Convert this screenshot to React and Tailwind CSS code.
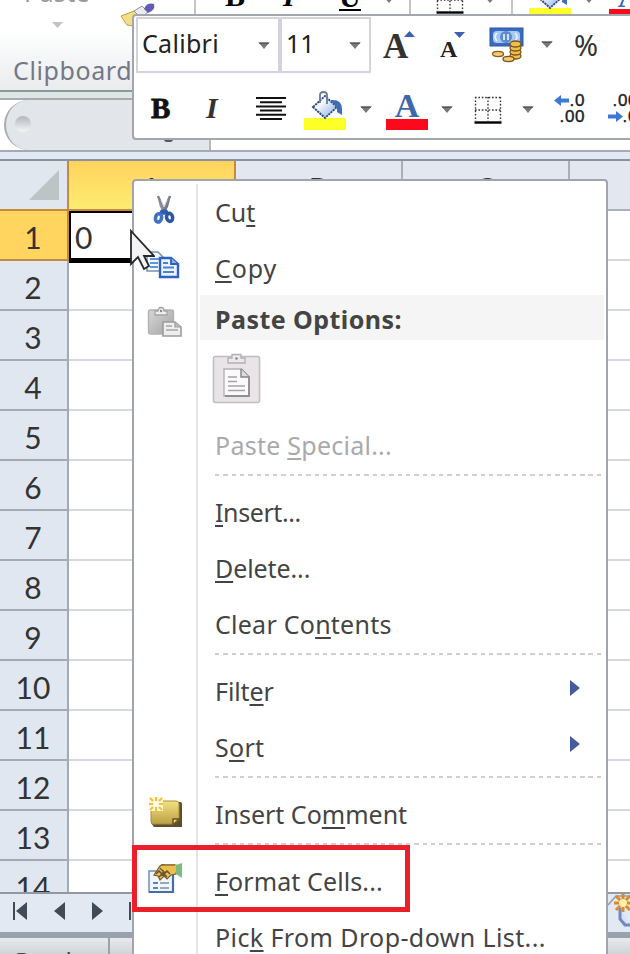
const COLUMNS = ['A', 'B', 'C', 'D'];
const ROWS = [1, 2, 3, 4, 5, 6, 7, 8, 9, 10, 11, 12, 13, 14];

const MENU = [
  { label: 'Cu&t', icon: 'cut' },
  { label: '&Copy', icon: 'copy', tracking: 'tracking-[0.9px]' },
  { type: 'paste', label: 'Paste Options:' },
  { label: 'Paste &Special...', disabled: true, tracking: 'tracking-[0.25px]' },
  { type: 'separator' },
  { label: '&Insert...', tracking: 'tracking-[-0.4px]' },
  { label: '&Delete...', tracking: 'tracking-[-0.1px]' },
  { label: 'Clear Co&ntents', tracking: 'tracking-[0.25px]' },
  { type: 'separator' },
  { label: 'Filt&er', submenu: true, tracking: 'tracking-[-0.1px]' },
  { label: 'S&ort', submenu: true, tracking: 'tracking-[0.3px]' },
  { type: 'separator' },
  { label: 'Insert Co&mment', icon: 'comment' },
  { type: 'separator' },
  { label: '&Format Cells...', icon: 'format', tracking: 'tracking-[0.1px]' },
  { label: 'Pic&k From Drop-down List...', tracking: 'tracking-[0.4px]' },
];

const CutIcon = () => (
  <svg className="w-[22px] h-[30px] relative -left-[1px]" viewBox="0 0 22 30">
    <path d="M4 1 L6 1 L12 14 L10 17 L7 12 Z" fill="#8f959d" />
    <path d="M18 1 L16 1 L10 14 L12 17 L15 12 Z" fill="#6e757e" />
    <path d="M5 1 L11 14 M17 1 L11 14" stroke="#7d848d" strokeWidth="2" />
    <path d="M8 5 L11 12 M14 5 L11 12" stroke="#d9dcdf" strokeWidth="1" />
    <path d="M8 14.500 L14 14.500 L16 18 L11 20 L6 18 Z" fill="#2f5fae" />
    <ellipse cx="5.500" cy="23" rx="3" ry="4.200" fill="#fff" stroke="#4272c4" strokeWidth="3.600" transform="rotate(14 6 23)" />
    <ellipse cx="16.500" cy="22.500" rx="3" ry="4" fill="#fff" stroke="#2c57a5" strokeWidth="3.600" transform="rotate(-14 16 22)" />
  </svg>
);

const CopyIcon = () => (
  <svg className="w-[34px] h-[30px] relative -left-[2px] -top-[1px]" viewBox="0 0 34 30">
    <path d="M1 2 H12 L17 7 V21 H1 Z" fill="#f4f8fd" stroke="#7891ab" strokeWidth="1.5" />
    <path d="M4 9 H13 M4 13 H12 M4 17 H12" stroke="#5d94dc" strokeWidth="2" />
    <path d="M14 8 H25 L32 14 V27 H14 Z" fill="#eaf3ff" stroke="#2e61c0" strokeWidth="2.400" />
    <path d="M25 8 V14 H32" fill="#8fb4ea" stroke="#2e61c0" strokeWidth="1.8" />
    <path d="M17 13 H22 M17 17.5 H28 M17 22 H28" stroke="#4a80d8" strokeWidth="2.200" />
  </svg>
);

const PasteIcon = () => (
  <svg className="w-[36px] h-[32px]" viewBox="0 0 36 32">
    <defs>
      <linearGradient id="clip" x1="0" y1="0" x2="1" y2="1">
        <stop offset="0" stopColor="#d8d8d8" />
        <stop offset="1" stopColor="#a2a2a2" />
      </linearGradient>
    </defs>
    <rect x="1.5" y="4" width="25" height="24" rx="2" fill="url(#clip)" stroke="#b2b2b2" strokeWidth="1.4" />
    <path d="M8 9 V5 H11 Q11 1.5 14 1.5 T17 5 H20 V9 Z" fill="#efefef" stroke="#a5a5a5" strokeWidth="1.3" />
    <circle cx="14" cy="5" r="1.2" fill="#888" />
    <path d="M16 16 H28 L34 21 V30 H16 Z" fill="#eee" stroke="#9c9c9c" strokeWidth="1.6" />
    <path d="M28 16 V21 H34" fill="#bbb" stroke="#9c9c9c" strokeWidth="1.2" />
    <path d="M19 20 H25 M19 24 H31" stroke="#a5a5a5" strokeWidth="1.5" />
  </svg>
);

const CommentIcon = () => (
  <svg className="w-[36px] h-[32px]" viewBox="0 0 36 32">
    <defs>
      <linearGradient id="note" x1="0" y1="0" x2="0" y2="1">
        <stop offset="0" stopColor="#f3e185" />
        <stop offset="1" stopColor="#bd9f42" />
      </linearGradient>
    </defs>
    <path d="M8 6 H33 Q35 6 35 8 V31 H7 L4 27 Z" fill="#5c4e2d" />
    <path d="M7 5 H29 Q32 5 32 8 V24 L27 28 H6 Q4 28 4 25 V9 Z" fill="url(#note)" stroke="#a98f3d" strokeWidth="1" />
    <path d="M26 29 V23 H32 Z" fill="#f3dc77" stroke="#665322" strokeWidth="1.5" />
    <path d="M2 1 H16 V15 H2 Z" fill="#fff7d6" />
    <path d="M9 1 V5 M9 11 V15 M2 8 H6 M12 8 H16 M3 2 L6 5 M12 11 L15 14 M15 2 L12 5 M6 11 L3 14" stroke="#f0c23c" strokeWidth="2" />
    <circle cx="9" cy="8" r="2" fill="#fff" />
  </svg>
);

const FormatIcon = () => (
  <svg className="w-[36px] h-[32px] relative -top-[1px]" viewBox="0 0 36 32">
    <rect x="2" y="9" width="24" height="21" fill="#f1f6fd" stroke="#7794bf" strokeWidth="1.6" />
    <path d="M26 9 V30 H2" fill="none" stroke="#456da8" strokeWidth="2.2" />
    <path d="M6 21 H11 M6 26 H11" stroke="#5685c8" strokeWidth="2" />
    <path d="M13 21 H22 M13 26 H22" stroke="#7c8ea8" strokeWidth="1.4" />
    <path d="M7 13 L13 4 Q15 2 18 3 L29 3 V12 L24 13 L20 17 L17 14 L13 18 L11 14 Z" fill="#e5c468" stroke="#7a5d25" strokeWidth="1.2" />
    <path d="M9 12 L12 9 L16 13 L20 9 L23 12 M12 15 L16 11 L20 15 M13 6 L18 11" fill="none" stroke="#6f5527" strokeWidth="1.6" />
    <path d="M16 3 H28 Q30 3 30 5 V10 Q25 12 20 8 L14 7 Z" fill="#f0bd4c" />
    <path d="M14 3 H28" stroke="#81652c" strokeWidth="1.3" />
    <path d="M29 3 L35 1 V16 L29 12 Z" fill="#7fba7a" />
  </svg>
);

const MENU_ICONS = { cut: CutIcon, copy: CopyIcon, comment: CommentIcon, format: FormatIcon };

const PasteButton = () => (
  <svg className="block w-[49px] h-[52px]" viewBox="0 0 49 52">
    <rect x="1.5" y="3.500" width="46" height="46" rx="2" fill="#e8e4e8" stroke="#c0bdc0" strokeWidth="1.6" />
    <path d="M16 10 V5 H20 V1.5 H29 V5 H33 V10 Z" fill="#ece9ec" stroke="#b2afb2" strokeWidth="1.3" />
    <circle cx="24.5" cy="5.5" r="1.3" fill="#8b888b" />
    <path d="M12 16 H29 L37 24 V43 H12 Z" fill="#fbfafb" stroke="#b5b1b5" strokeWidth="1.4" />
    <path d="M29 16 L37 24 V43 H13" fill="none" stroke="#918e91" strokeWidth="1.8" />
    <path d="M29 16 V24 H37" fill="#ddd" stroke="#858285" strokeWidth="1.4" />
    <path d="M16 24 H25 M16 28.5 H25 M16 33 H33 M16 37.5 H33" stroke="#a6a3a6" strokeWidth="1.5" />
  </svg>
);

const Caret = ({ className = '' }) => (
  <svg className={`shrink-0 w-[12px] h-[7px] ${className}`} viewBox="0 0 12 7">
    <path d="M0.5 0.5 H11.5 L6 7 Z" fill="#77797c" />
    <path d="M0.5 0.5 H11.5 L10.5 2 H1.5 Z" fill="#55575a" />
  </svg>
);

const FillIcon = () => (
  <svg className="shrink-0 w-[42px] h-[40px]" viewBox="0 0 42 40">
    <defs>
      <linearGradient id="pail" x1="0" y1="0" x2="1" y2="1">
        <stop offset="0.3" stopColor="#fff" />
        <stop offset="1" stopColor="#7fa7e0" />
      </linearGradient>
    </defs>
    <rect y="28" width="42" height="12" fill="#ffff28" />
    <path d="M9 17 L21 6 L33 17 L21 28 Z" fill="url(#pail)" stroke="#2c4d86" strokeWidth="1.9" strokeDasharray="2.2 0.8" />
    <path d="M16 13 V5 Q16 2 19.500 2 T23 5 V14" fill="none" stroke="#6b7b96" strokeWidth="1.8" />
    <path d="M27 10 Q38 9 38 19 V25 L33 22 Q34 15 27 12 Z" fill="#3e6cb5" />
  </svg>
);

const FontColorIcon = () => (
  <div className="shrink-0 w-[42px] h-[40px] flex flex-col items-center">
    <span className="h-[29px] pt-[3px] font-['Liberation_Serif',serif] font-bold text-[34px] leading-[25px] text-[#3f68ab]">A</span>
    <span className="w-[42px] h-[11px] bg-[#fc0a1b]" />
  </div>
);

const BorderIcon = () => (
  <svg className="shrink-0 w-[28px] h-[28px]" viewBox="0 0 28 28">
    <path d="M1 1.500 H27 M1 14 H27 M1.500 1 V25 M14 1 V25 M26.500 1 V25" stroke="#333" strokeWidth="1.4" strokeDasharray="1.6 1.8" />
    <path d="M0.500 26.500 H27.500" stroke="#000" strokeWidth="2.4" />
  </svg>
);

const MoneyIcon = () => (
  <svg className="shrink-0 w-[36px] h-[36px]" viewBox="0 0 36 36">
    <rect x="1" y="1" width="33" height="18" fill="#386cc0" stroke="#2b579f" />
    <rect x="4" y="4" width="27" height="12" rx="4" fill="#a9c8f1" />
    <ellipse cx="17" cy="10" rx="6" ry="6" fill="#5e8bd0" />
    <path d="M8 6 Q4 10 8 14 M26 6 Q30 10 26 14 M15 7 V13 M19 7 V13" stroke="#e9f2ff" strokeWidth="1.7" fill="none" />
    {[29, 25, 21, 17].map((y) => (
      <ellipse key={y} cx="26.500" cy={y} rx="5.500" ry="3" fill="#efbf4b" stroke="#79531c" strokeWidth="1.3" />
    ))}
    <ellipse cx="9" cy="27" rx="5.500" ry="2.600" fill="#f2cb72" stroke="#8b5c1c" strokeWidth="1.3" />
    <ellipse cx="19.500" cy="32" rx="5.500" ry="2.600" fill="#f2cb72" stroke="#79531c" strokeWidth="1.3" />
  </svg>
);

const DecimalArrow = ({ flipped }) => (
  <svg className={`w-[16px] h-[11px] ${flipped ? '-scale-x-100' : ''}`} viewBox="0 0 16 11">
    <path d="M0 5.500 L7 0 V3.500 H15 V7.500 H7 V11 Z" fill="#3c78d8" />
  </svg>
);

const DecimalIcon = ({ increase }) => (
  <div className="shrink-0 w-[34px] font-['Liberation_Sans',sans-serif] text-[17px] leading-[16px] tracking-[0.6px] text-[#222] [-webkit-text-stroke:0.4px_#222]">
    <div className={increase ? 'flex items-center justify-end' : 'text-right'}>
      {increase && <DecimalArrow />}
      {increase ? '.0' : '.00'}
    </div>
    <div className={increase ? 'text-right' : 'flex items-center justify-end'}>
      {!increase && <DecimalArrow flipped />}
      {increase ? '.00' : '.0'}
    </div>
  </div>
);

const Ribbon = () => (
  <div className="h-[92px] shrink-0 border-b-2 border-[#8d9996] bg-linear-to-b from-white from-35% to-[#e9ebed]">
    <div className="flex h-[33px] overflow-hidden">
      <div className="w-[114px] shrink-0 flex flex-col items-center">
        <span className="h-[22px] text-[25px] leading-[25px] tracking-[0.3px] text-[#999] -mt-[20px]">Paste</span>
        <svg className="w-[11px] h-[6px] mt-[20px]" viewBox="0 0 11 6">
          <path d="M0 0 H11 L5.500 6 Z" fill="#c0c2c4" />
        </svg>
      </div>
      <svg className="w-[80px] h-[33px] shrink-0" viewBox="0 0 80 33">
        <path d="M7 16 L20 11 L27 17 L19 26 L13 25 Z" fill="#f5df85" stroke="#b39b51" />
        <path d="M20 11 L28 6 L34 12 L27 18 Z" fill="#ececec" stroke="#909090" />
        <path d="M30 9 Q33 2 40 4 Q42 10 34 13 Z" fill="#625cb3" />
      </svg>
      <div className="w-[215px] shrink-0 flex border-l-2 border-[#c3c5cb] font-['Liberation_Serif',serif] font-bold text-[30px] leading-[28px]">
        <span className="w-[20px] ml-[29px] -mt-[18px]">B</span>
        <span className="w-[14px] ml-[38px] -mt-[18px] italic">I</span>
        <span className="w-[22px] ml-[42px] -mt-[17px] h-[28px] border-b-2 border-black">U</span>
        <Caret className="ml-[22px] -mt-[4px]" />
      </div>
      <div className="w-[102px] shrink-0 flex border-l-2 border-[#c3c5cb]">
        <div className="ml-[25px] -mt-[14px]"><BorderIcon /></div>
        <Caret className="ml-[20px] -mt-[4px]" />
      </div>
      <div className="flex border-l-2 border-[#c3c5cb]">
        <div className="ml-[16px] -mt-[20px]"><FillIcon /></div>
        <Caret className="ml-[12px] -mt-[4px]" />
        <div className="ml-[14px] -mt-[20px]"><FontColorIcon /></div>
      </div>
    </div>
    <div className="pl-[13px] pt-[19px] text-[25px] leading-[36px] tracking-[0.6px] text-[#737887]">Clipboard</div>
  </div>
);

const FormulaBar = () => (
  <div className="shrink-0 h-[69px] pt-[6px] bg-[#dce6e4] border-b-2 border-[#8b929a]">
    <div className="h-[54px] flex bg-white border-y-2 border-[#a5abaf]">
      <div className="ml-[4px] w-[205px] pl-[9px] pt-[16px] flex rounded-l-[28px] border-l-2 border-[#a5abaf] bg-[#e2e6ea]">
        <div className="size-[16px] rounded-full bg-linear-to-b from-[#b3b7ba] to-[#f5f6f7]" />
        <div className="ml-[133px] mt-[23px] w-[9px] h-[3px] rounded-b-full bg-[#55585c]" />
      </div>
      <div className="w-[2px] bg-[#b4b7bc]" />
    </div>
    <div className="h-[7px] bg-[#e1e8f6]" />
  </div>
);

const Sheet = () => (
  <div className="shrink-0 h-[731px] overflow-hidden bg-white font-['Lato',sans-serif] text-[30px] text-[#333]">
    <div className="flex h-[50px]">
      <div className="w-[69px] shrink-0 flex items-center justify-end pr-[8px] bg-[#e0e7ef] border-b-2 border-r-2 border-[#c58a42]">
        <svg className="w-[30px] h-[30px]" viewBox="0 0 30 30">
          <path d="M30 0 V30 H0 Z" fill="#bcc4c5" />
        </svg>
      </div>
      {COLUMNS.map((column) => (
        <div
          key={column}
          className={`w-[167px] shrink-0 flex items-center justify-center pt-[5px] border-b-2 border-r-2 leading-[44px] ${
            column === 'A'
              ? 'border-[#c58a42] bg-linear-to-b from-[#ffd35d] to-[#fdec71]'
              : 'border-[#a9afb9] bg-[#e3e7ef]'
          }`}
        >
          {column}
        </div>
      ))}
    </div>
    {ROWS.map((row) => (
      <div key={row} className="flex h-[50px]">
        <div
          className={`w-[69px] shrink-0 flex items-center justify-center border-b-2 border-r-2 pt-[5px] pr-px ${
            row === 1 ? 'bg-[#ffd55f] border-[#c58a42]' : 'bg-[#e0e7f0] border-[#a3aab4]'
          }`}
        >
          {row}
        </div>
        {COLUMNS.map((column) =>
          row === 1 && column === 'A' ? (
            <div key={column} className="relative z-10 w-[167px] h-[52px] shrink-0 pl-[4px] pt-[6px] leading-[36px] border-2 border-b-[5px] border-black">
              0
            </div>
          ) : (
            <div key={column} className="w-[167px] shrink-0 border-b-2 border-r-2 border-[#d5d8df]" />
          )
        )}
      </div>
    ))}
  </div>
);

const SheetTabs = () => (
  <div className="shrink-0 h-[46px] flex items-center border-t-2 border-b-[6px] border-t-[#9298a3] border-b-[#98a2ae] bg-[#e3e9f2]">
    <svg className="w-[140px] h-[20px] relative -top-[2px]" viewBox="0 0 140 20">
      <path d="M13 1 H15 V19 H13 Z M27 1 V19 L16 10 Z M65 1 V19 L54 10 Z M92 1 V19 L103 10 Z M129 1 H131 V19 H129 Z" fill="#414b57" />
    </svg>
    <svg className="ml-auto w-[22px] h-[38px] relative -top-[2px]" viewBox="0 0 22 38">
      <path d="M0 13 L8 4 H22" fill="none" stroke="#959daa" strokeWidth="1.5" />
      <path d="M12 16 V27 L17 33 H22" fill="#d6e2f7" stroke="#7089c0" strokeWidth="3" />
      <path d="M15 2 V20 M6 11 H22 M8 4 L22 18 M22 4 L8 18" stroke="#d98c2b" strokeWidth="3" />
      <circle cx="15" cy="11" r="4" fill="#fff0a8" />
    </svg>
  </div>
);

const StatusBar = () => (
  <div className="shrink-0 h-[17px] flex overflow-hidden bg-linear-to-b from-[#e8eaed] to-[#cfd3d7]">
    <div className="w-[110px] shrink-0 pl-[15px] pt-[8px] text-[24px] leading-[30px] text-[#444] border-r-2 border-[#9da2a8]">Ready</div>
  </div>
);

const MiniToolbar = () => (
  <div className="absolute left-[132px] top-[14px] w-[520px] h-[126px] rounded-[4px] border-2 border-[#a4a6ad] bg-white text-[#333]">
    <div className="flex items-start pt-[1px] pl-[2px] h-[65px]">
      <div className="w-[144px] h-[56px] shrink-0 flex items-center justify-between pl-[4px] pr-[8px] border-2 border-[#d3d4db] text-[25px] text-[#222] tracking-[0.3px]">
        <span className="relative -top-[1px]">Calibri</span>
        <Caret />
      </div>
      <div className="w-[91px] h-[56px] shrink-0 flex items-center justify-between pl-[4px] pr-[8px] border-2 border-[#d3d4db] text-[25px] text-[#222]">
        <span className="relative -top-[1px]">11</span>
        <Caret />
      </div>
      <div className="flex h-[56px] pt-[11px] font-['Liberation_Serif',serif] font-bold">
        <span className="w-[25px] ml-[12px] text-[35px] leading-[38px]">A</span>
        <svg className="w-[11px] h-[6px] mt-[3px] -ml-[4px]" viewBox="0 0 11 6"><path d="M0 6 L5.500 0 L11 6 Z" fill="#3c5fae" /></svg>
        <span className="w-[17px] ml-[25px] text-[24px] leading-[43px] text-[#222]">A</span>
        <svg className="w-[11px] h-[6px] mt-[4px] -ml-[3px]" viewBox="0 0 11 6"><path d="M0 0 H11 L5.500 6 Z" fill="#3c5fae" /></svg>
        <div className="ml-[24px] -mt-px"><MoneyIcon /></div>
        <Caret className="ml-[16px] mt-[13px]" />
        <span className="ml-[21px] font-['Noto_Sans',sans-serif] font-normal text-[29px] leading-[33px]">%</span>
      </div>
    </div>
    <div className="flex items-center h-[56px] pl-[17px] pb-[2px]">
      <span className="w-[22px] font-['Liberation_Serif',serif] font-bold text-[29px] leading-[30px] text-[#111] [-webkit-text-stroke:0.8px_#111]">B</span>
      <span className="w-[20px] ml-[33px] font-['Liberation_Serif',serif] font-bold italic text-[30px] leading-[30px]">I</span>
      <svg className="w-[30px] h-[24px] ml-[30px]" viewBox="0 0 30 24">
        <path d="M0 2 H30 M4 6.200 H26 M0 10.400 H30 M4 14.600 H26 M0 18.800 H30 M4 23 H26" stroke="#111" strokeWidth="2" />
      </svg>
      <div className="ml-[18px] mt-[3px]"><FillIcon /></div>
      <Caret className="ml-[14px] mt-[3px]" />
      <div className="ml-[14px] mt-[3px]"><FontColorIcon /></div>
      <Caret className="ml-[13px] mt-[3px]" />
      <div className="ml-[21px] mt-[3px]"><BorderIcon /></div>
      <Caret className="ml-[20px] mt-[3px]" />
      <div className="ml-[17px] mt-px"><DecimalIcon increase /></div>
      <div className="ml-[19px] mt-px"><DecimalIcon /></div>
    </div>
  </div>
);

const MenuLabel = ({ text }) => {
  const at = text.indexOf('&');
  if (at < 0) return <span>{text}</span>;
  return (
    <span className="whitespace-pre">
      {text.slice(0, at)}
      <span className="underline decoration-2 underline-offset-[3px] [text-decoration-skip-ink:none]">{text[at + 1]}</span>
      {text.slice(at + 2)}
    </span>
  );
};

const MenuItem = ({ item }) => {
  if (item.type === 'separator') {
    return (
      <div className="flex h-[11px]">
        <div className="w-[64px] border-r-2 border-[#e5e5e7]" />
        <div className="ml-[17px] mt-px w-[388px] h-[2px] bg-[repeating-linear-gradient(90deg,#cfcfcf_0px,#cfcfcf_4.300px,transparent_4.300px,transparent_8.300px)]" />
      </div>
    );
  }

  if (item.type === 'paste') {
    return (
      <div className="flex h-[121px]">
        <div className="w-[64px] shrink-0 flex justify-center pt-[10px] border-r-2 border-[#e5e5e7]">
          <PasteIcon />
        </div>
        <div className="grow -mt-px pl-[2px] pr-[2px]">
          <div className="h-[45px] pl-[15px] pt-px bg-[#f5f5f5] font-bold text-[25px] leading-[47px] tracking-[0.45px]">{item.label}</div>
          <div className="pl-[12px] pt-[13px]"><PasteButton /></div>
        </div>
      </div>
    );
  }

  const Icon = MENU_ICONS[item.icon];
  return (
    <div className="flex h-[56px]">
      <div className="w-[64px] shrink-0 flex items-center justify-center pb-[4px] border-r-2 border-[#e5e5e7]">
        {Icon && <Icon />}
      </div>
      <div
        className={`grow flex items-center justify-between pl-[17px] pr-[26px] pt-px text-[25px] ${item.tracking ?? ''} ${
          item.disabled ? 'text-[#a9a9ad]' : ''
        }`}
      >
        <MenuLabel text={item.label} />
        {item.submenu && (
          <svg className="w-[10px] h-[16px] relative -top-[4px]" viewBox="0 0 10 16">
            <path d="M0 0 L10 8 L0 16 Z" fill="#435a9b" />
          </svg>
        )}
      </div>
    </div>
  );
};

const ContextMenu = () => (
  <div className="absolute left-[132px] top-[179px] w-[476px] h-[800px] pt-[3px] rounded-[4px] border-2 border-[#a0a4ac] bg-white text-[#444]">
    {MENU.map((item, i) => (
      <MenuItem key={i} item={item} />
    ))}
  </div>
);

const Pointer = () => (
  <svg className="absolute left-[129px] top-[229px] w-[26px] h-[42px]" viewBox="0 0 26 42">
    <path d="M2 2 V35 L9 28 L15 40 L20 37 L15 27 H25 Z" fill="#f3f3f4" stroke="#26282c" strokeWidth="1.8" />
  </svg>
);

export default function App() {
  return (
    <div className="relative isolate w-[630px] h-[954px] overflow-hidden flex flex-col bg-white font-['Noto_Sans',sans-serif]">
      <Ribbon />
      <FormulaBar />
      <Sheet />
      <SheetTabs />
      <StatusBar />
      <div className="absolute inset-0 z-20">
        <MiniToolbar />
        <ContextMenu />
        <Pointer />
        <div className="absolute left-[132px] top-[845px] w-[278px] h-[67px] border-5 border-[#ea1f2a]" />
      </div>
    </div>
  );
}
